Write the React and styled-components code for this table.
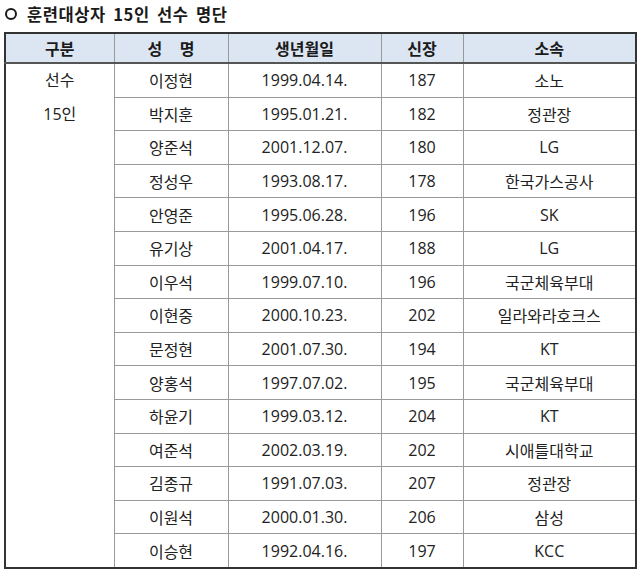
import React from "react";
import styled, { createGlobalStyle } from "styled-components";

const GlobalStyle = createGlobalStyle`
  body {
    margin: 0;
    background: #fff;
    font-family: "Open Sans", "Noto Sans CJK KR", sans-serif;
    color: #222;
  }
`;

const Page = styled.div`
  padding: 1px 3px 0 4px;
`;

const Title = styled.h2`
  display: flex;
  align-items: center;
  gap: 10px;
  margin: 0 0 6px 0;
  height: 25px;
  font-family: "Noto Sans CJK KR", sans-serif;
  font-size: 16.5px;
  font-weight: 700;
  color: #1a1a1a;
  letter-spacing: 0.6px;
  word-spacing: 3px;
`;

const Circle = styled.span`
  box-sizing: border-box;
  width: 12px;
  height: 12px;
  border: 2px solid #1a1a1a;
  border-radius: 50%;
  margin-left: 1px;
`;

const Table = styled.table`
  width: 633px;
  border-collapse: collapse;
  border: 2px solid #333;
  table-layout: fixed;
  font-size: 16px;
`;

const HeadCell = styled.th`
  background: #dce6f2;
  height: 28px;
  padding: 0;
  font-family: "Noto Sans CJK KR", sans-serif;
  font-weight: 700;
  color: #1a1a1a;
  border-left: 1px solid #999;
  border-bottom: 2px solid #555;
  text-align: center;
  word-spacing: ${(p) => (p.$spaced ? "14px" : "0")};
`;

const Cell = styled.td`
  height: 32.6px;
  padding: 0;
  text-align: center;
  border: 1px solid #999;
  color: #222;
`;

const GroupCell = styled.td`
  vertical-align: top;
  text-align: center;
  padding: 0;
  border-right: 1px solid #999;
  line-height: 33.6px;
  color: #222;
`;

const players = [
  ["이정현", "1999.04.14.", "187", "소노"],
  ["박지훈", "1995.01.21.", "182", "정관장"],
  ["양준석", "2001.12.07.", "180", "LG"],
  ["정성우", "1993.08.17.", "178", "한국가스공사"],
  ["안영준", "1995.06.28.", "196", "SK"],
  ["유기상", "2001.04.17.", "188", "LG"],
  ["이우석", "1999.07.10.", "196", "국군체육부대"],
  ["이현중", "2000.10.23.", "202", "일라와라호크스"],
  ["문정현", "2001.07.30.", "194", "KT"],
  ["양홍석", "1997.07.02.", "195", "국군체육부대"],
  ["하윤기", "1999.03.12.", "204", "KT"],
  ["여준석", "2002.03.19.", "202", "시애틀대학교"],
  ["김종규", "1991.07.03.", "207", "정관장"],
  ["이원석", "2000.01.30.", "206", "삼성"],
  ["이승현", "1992.04.16.", "197", "KCC"],
];

export default function App() {
  return (
    <Page>
      <GlobalStyle />
      <Title>
        <Circle />
        훈련대상자 15인 선수 명단
      </Title>
      <Table>
        <colgroup>
          <col style={{ width: 109 }} />
          <col style={{ width: 114 }} />
          <col style={{ width: 153 }} />
          <col style={{ width: 82 }} />
          <col />
        </colgroup>
        <thead>
          <tr>
            <HeadCell>구분</HeadCell>
            <HeadCell $spaced>성 명</HeadCell>
            <HeadCell>생년월일</HeadCell>
            <HeadCell>신장</HeadCell>
            <HeadCell>소속</HeadCell>
          </tr>
        </thead>
        <tbody>
          {players.map((p, i) => (
            <tr key={p[0]}>
              {i === 0 && (
                <GroupCell rowSpan={players.length}>
                  선수
                  <br />
                  15인
                </GroupCell>
              )}
              {p.map((v, j) => (
                <Cell key={j}>{v}</Cell>
              ))}
            </tr>
          ))}
        </tbody>
      </Table>
    </Page>
  );
}
